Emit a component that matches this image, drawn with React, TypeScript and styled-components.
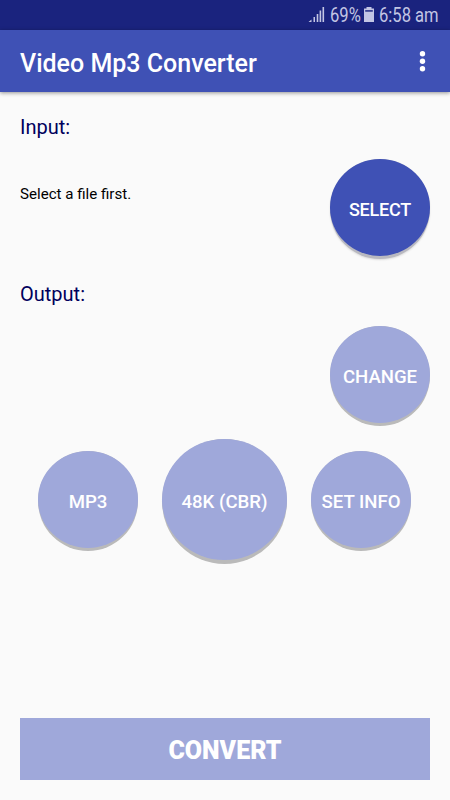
import React from 'react';
import styled, { createGlobalStyle } from 'styled-components';

const GlobalStyle = createGlobalStyle`
  * { box-sizing: border-box; }
  body {
    margin: 0;
    background: #fafafa;
    font-family: Roboto, "Liberation Sans", sans-serif;
  }
  button { font: inherit; border: 0; padding: 0; cursor: pointer; }
`;

const Screen = styled.div`
  display: flex;
  flex-direction: column;
  width: 450px;
  height: 800px;
  overflow: hidden;
  background: #fafafa;
`;

const StatusBar = styled.div`
  display: flex;
  align-items: center;
  height: 30px;
  flex: none;
  padding-left: 308px;
  background: #1a237e;
  color: #c3c6e4;
`;

const StatusText = styled.span<{ $width: number; $scale: number }>`
  width: ${(p) => p.$width}px;
  padding-top: 2px;
  font-size: 19.5px;
  line-height: 30px;
  white-space: nowrap;
  transform: scaleX(${(p) => p.$scale});
  transform-origin: left center;
`;

const SignalIcon = styled.svg`
  width: 22px;
  height: 30px;
  flex: none;
`;

const BatteryIcon = styled.svg`
  width: 16px;
  height: 30px;
  flex: none;
`;

const AppBar = styled.header`
  display: flex;
  align-items: center;
  justify-content: space-between;
  height: 62px;
  flex: none;
  padding: 2px 22px 0 20px;
  background: #3f51b5;
  box-shadow: 0 1px 4px rgba(0, 0, 0, 0.42);
`;

const Title = styled.h1`
  margin: 0;
  padding-top: 3px;
  font-size: 25px;
  line-height: 30px;
  font-weight: 500;
  color: #fff;
  white-space: nowrap;
`;

const MenuButton = styled.button`
  display: flex;
  background: none;
`;

const Main = styled.main`
  display: flex;
  flex-direction: column;
  flex: 1;
  padding: 20px 20px;
`;

const SectionLabel = styled.h2`
  margin: 0;
  height: 30px;
  font-size: 20px;
  line-height: 30px;
  font-weight: 400;
  color: #00005c;
`;

const FileRow = styled.div<{ $gap: number }>`
  display: flex;
  justify-content: space-between;
  height: 100px;
  margin: 17px 0 ${(p) => p.$gap}px;
`;

const FileName = styled.p`
  margin: 25px 0 0;
  font-size: 15.1px;
  line-height: 20px;
  color: #000;
  white-space: nowrap;
`;

const RoundButton = styled.button<{ $size?: number; $active?: boolean }>`
  display: flex;
  flex: none;
  width: ${(p) => p.$size ?? 100}px;
  height: ${(p) => p.$size ?? 100}px;
  padding-bottom: 3.5px;
  border-radius: 50%;
  background: ${(p) => (p.$active ? '#b9b9c0' : '#bababa')};
  box-shadow: ${(p) => (p.$active ? '0 1px 2px rgba(0, 0, 0, 0.12)' : 'none')};
`;

const Face = styled.span<{ $active?: boolean }>`
  display: flex;
  align-items: center;
  justify-content: center;
  width: 100%;
  height: 100%;
  padding-top: 6px;
  border-radius: 50%;
  background: ${(p) => (p.$active ? '#3f51b5' : '#9fa8da')};
  color: #fff;
  font-size: ${(p) => (p.$active ? 18 : 18.6)}px;
  letter-spacing: ${(p) => (p.$active ? '-0.2px' : 'normal')};
  line-height: 22px;
  font-weight: 500;
  white-space: nowrap;
`;

const Options = styled.div`
  display: flex;
  align-items: center;
  gap: 24px;
  margin-left: 18px;
`;

const ConvertButton = styled.button`
  height: 62.5px;
  margin-top: auto;
  padding-top: 5px;
  background: #9fa8da;
  color: #fff;
  font-size: 25px;
  line-height: 30px;
  font-weight: 900;
`;

interface RoundProps {
  label: string;
  size?: number;
  active?: boolean;
}

function Round({ label, size, active }: RoundProps) {
  return (
    <RoundButton $size={size} $active={active}>
      <Face $active={active}>{label}</Face>
    </RoundButton>
  );
}

export default function App() {
  return (
    <Screen>
      <GlobalStyle />
      <StatusBar>
        <SignalIcon viewBox="0 0 22 30" fill="currentColor">
          <path d="M0.5 22L3.5 19.5V22zM5.5 17h1.5v5H5.5zM8.7 14h1.6v8H8.7zM11.6 10.5h1.6V22h-1.6zM14.5 7h1.6v15h-1.6z" />
        </SignalIcon>
        <StatusText $width={33} $scale={0.85}>69%</StatusText>
        <BatteryIcon viewBox="0 0 16 30" fill="currentColor">
          <path d="M3.5 7h5v1.5h-5zM1 8.5h10V22H1z" />
          <path d="M2.2 10h7.6v1.8H2.2z" fill="#1a237e" opacity="0.8" />
        </BatteryIcon>
        <StatusText $width={60} $scale={0.85}>6:58 am</StatusText>
      </StatusBar>
      <AppBar>
        <Title>Video Mp3 Converter</Title>
        <MenuButton aria-label="More options">
          <svg width="11" height="24" viewBox="0 0 11 24" fill="#fff">
            <circle cx="5.5" cy="3.7" r="2.7" />
            <circle cx="5.5" cy="11.2" r="2.7" />
            <circle cx="5.5" cy="18.7" r="2.7" />
          </svg>
        </MenuButton>
      </AppBar>
      <Main>
        <SectionLabel>Input:</SectionLabel>
        <FileRow $gap={20}>
          <FileName>Select a file first.</FileName>
          <Round label="SELECT" active />
        </FileRow>
        <SectionLabel>Output:</SectionLabel>
        <FileRow $gap={12.5}>
          <FileName />
          <Round label="CHANGE" />
        </FileRow>
        <Options>
          <Round label="MP3" />
          <Round label="48K (CBR)" size={125} />
          <Round label="SET INFO" />
        </Options>
        <ConvertButton>CONVERT</ConvertButton>
      </Main>
    </Screen>
  );
}
